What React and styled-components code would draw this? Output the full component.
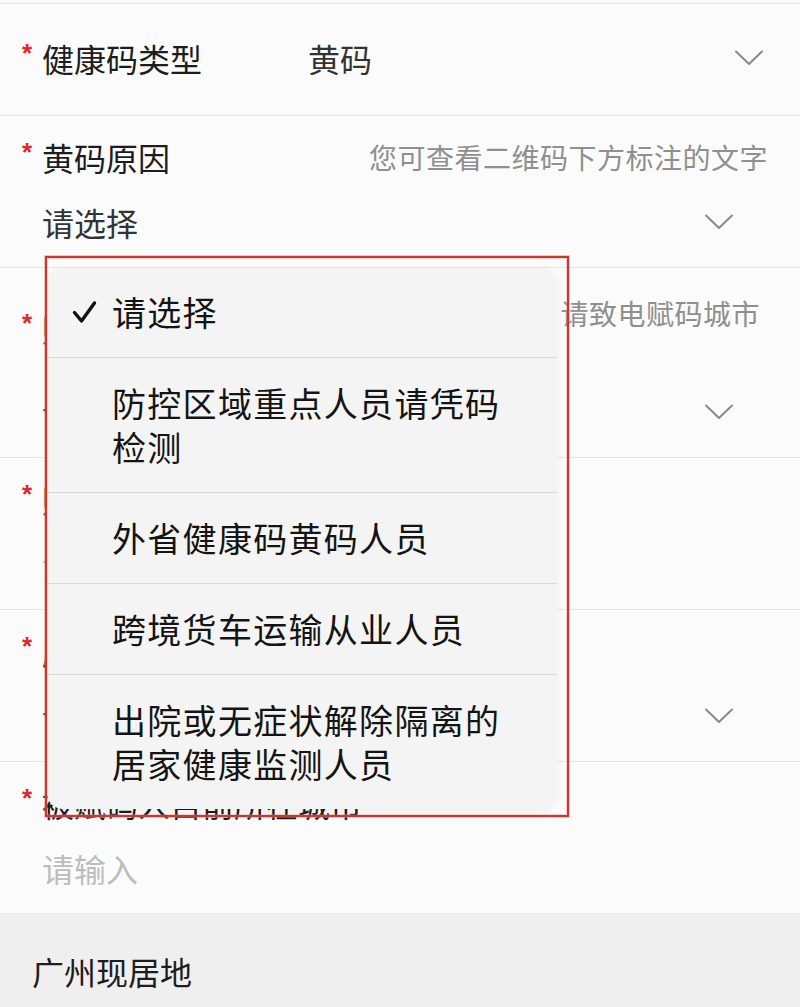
import React from "react";
import styled, { createGlobalStyle } from "styled-components";

const Global = createGlobalStyle`
  html, body { margin: 0; padding: 0; background: #efefef; }
  body { font-family: "Noto Sans CJK SC", "Noto Sans", sans-serif; }
  * { box-sizing: border-box; }
`;

const Page = styled.div`
  position: relative;
  width: 800px;
  min-height: 1007px;
  background: #efefef;
  overflow: hidden;
`;

const Form = styled.div`
  background: #fbfbfb;
  padding-top: 3px;
  border-bottom: 1px solid #e8e8e8;
`;

const InlineRow = styled.div`
  display: flex;
  align-items: center;
  height: 113px;
  padding: 0 37px 4px 22px;
  border-top: 1px solid #e4e4e4;
  border-bottom: 1px solid #e4e4e4;
`;

const StackRow = styled.div`
  display: flex;
  flex-direction: column;
  gap: 27px;
  padding: 22px 0 26px 22px;
  border-bottom: ${(p) => (p.$last ? "none" : "1px solid #e4e4e4")};
`;

const Header = styled.div`
  display: flex;
  align-items: center;
  justify-content: space-between;
  min-height: ${(p) => (p.$tall ? "76px" : "38px")};
  padding-right: ${(p) => (p.$hintRight ? p.$hintRight : 32)}px;
`;

const Label = styled.div`
  display: flex;
  align-items: center;
  width: ${(p) => (p.$width ? p.$width + "px" : "auto")};
  flex-shrink: 0;
  font-size: 32px;
  line-height: 38px;
  color: #1d1d1d;
`;

const Star = styled.span`
  width: 20px;
  font-size: 26px;
  font-weight: 700;
  color: #e2262c;
  line-height: 26px;
  margin-top: -10px;
  font-family: "Liberation Sans", sans-serif;
`;

const Hint = styled.div`
  font-size: 28px;
  letter-spacing: 0.5px;
  line-height: 38px;
  color: #8f8f8f;
  text-align: right;
  white-space: nowrap;
  align-self: ${(p) => (p.$top ? "flex-start" : "center")};
  margin-top: ${(p) => (p.$top ? "4px" : "0")};
`;

const ValueLine = styled.div`
  display: flex;
  align-items: center;
  justify-content: space-between;
  height: 38px;
  padding-left: 20px;
  padding-right: 67px;
`;

const Value = styled.div`
  flex: 1;
  font-size: 32px;
  line-height: 38px;
  color: ${(p) => (p.$placeholder ? "#bdbdbd" : "#333333")};
`;

const Section = styled.div`
  padding: 38px 32px;
  font-size: 32px;
  line-height: 38px;
  color: #1d1d1d;
`;

const Chevron = () => (
  <svg width="28" height="16" viewBox="0 0 28 16" fill="none">
    <path d="M1 1.5 L14 14 L27 1.5" stroke="#8a8a8a" strokeWidth="2" strokeLinecap="round" strokeLinejoin="round" />
  </svg>
);

const Menu = styled.div`
  position: absolute;
  left: 47px;
  top: 268px;
  width: 510px;
  background: #f4f4f4;
  border-radius: 16px;
  box-shadow: 0 2px 10px rgba(0, 0, 0, 0.06);
  overflow: hidden;
`;

const Item = styled.div`
  display: flex;
  align-items: flex-start;
  padding: ${(p) => (p.$first ? "22px" : "23px")} 40px 23px 20px;
  border-top: ${(p) => (p.$first ? "none" : "1px solid #d9d9d9")};
`;

const Check = styled.div`
  width: 45px;
  height: 44px;
  flex-shrink: 0;
  display: flex;
  align-items: center;
  padding-left: 5px;
`;

const ItemText = styled.div`
  font-size: 34px;
  letter-spacing: 1.3px;
  line-height: 44px;
  color: #141414;
`;

const Annotation = styled.div`
  position: absolute;
  left: 45px;
  top: 256px;
  width: 524px;
  height: 561px;
  border: 2px solid #c9372e;
  box-shadow: 0 0 0 1px rgba(235, 130, 120, 0.45), inset 0 0 0 1px rgba(235, 130, 120, 0.35);
  pointer-events: none;
`;

const rows = [
  { label: "黄码原因", hint: "您可查看二维码下方标注的文字", value: "请选择", select: true },
  { label: "赋码城市", hint: "请致电赋码城市", value: "请选择", select: true, tall: true },
  { label: "赋码日期", value: "请输入", placeholder: true },
  { label: "所在区域", value: "请选择", select: true },
  { label: "被赋码人目前所在城市", value: "请输入", placeholder: true, last: true },
];

const options = [
  { text: "请选择", checked: true },
  { text: "防控区域重点人员请凭码检测" },
  { text: "外省健康码黄码人员" },
  { text: "跨境货车运输从业人员" },
  { text: "出院或无症状解除隔离的居家健康监测人员" },
];

export default function App() {
  return (
    <Page>
      <Global />
      <Form>
        <InlineRow>
          <Label $width={286}>
            <Star>*</Star>健康码类型
          </Label>
          <Value>黄码</Value>
          <Chevron />
        </InlineRow>
        {rows.map((r) => (
          <StackRow key={r.label} $last={r.last}>
            <Header $tall={r.tall} $hintRight={r.tall ? 40 : 32}>
              <Label>
                <Star>*</Star>
                {r.label}
              </Label>
              {r.hint && <Hint $top={r.tall}>{r.hint}</Hint>}
            </Header>
            <ValueLine>
              <Value $placeholder={r.placeholder}>{r.value}</Value>
              {r.select && <Chevron />}
            </ValueLine>
          </StackRow>
        ))}
      </Form>
      <Section>广州现居地</Section>

      <Menu>
        {options.map((o, i) => (
          <Item key={o.text} $first={i === 0}>
            <Check>
              {o.checked && (
                <svg width="25" height="24" viewBox="0 0 25 24" fill="none">
                  <path d="M2.5 12.5 L9.5 21 L22.5 3" stroke="#111" strokeWidth="3.4" strokeLinecap="round" strokeLinejoin="round" />
                </svg>
              )}
            </Check>
            <ItemText>{o.text}</ItemText>
          </Item>
        ))}
      </Menu>
      <Annotation />
    </Page>
  );
}
